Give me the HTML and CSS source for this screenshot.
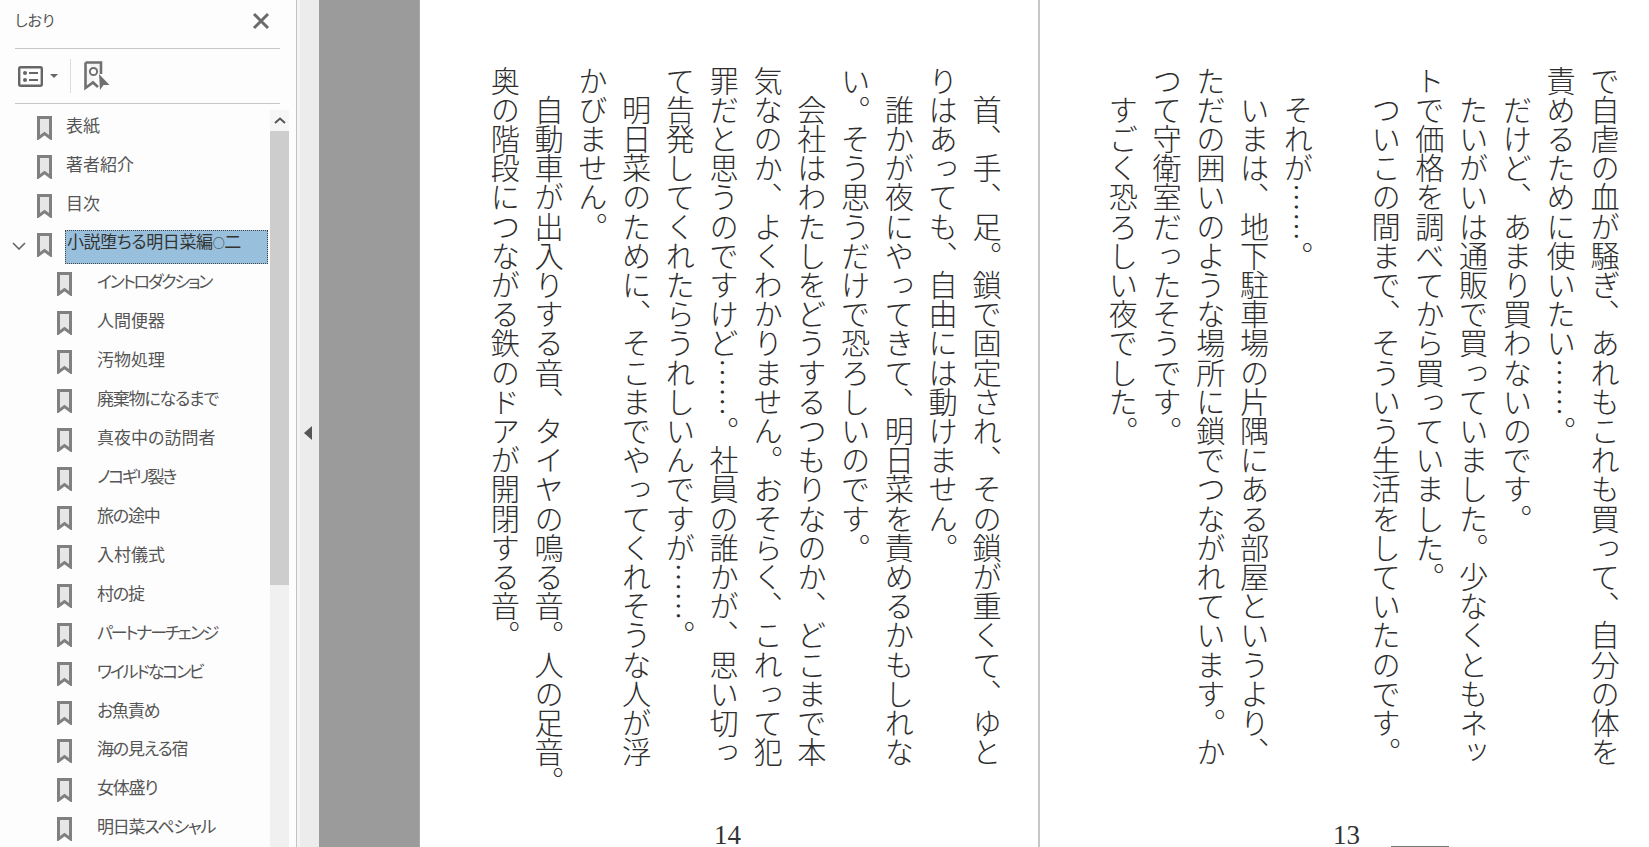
FILE: index.html
```html
<!DOCTYPE html>
<html lang="ja">
<head>
  <meta charset="UTF-8" />
  <title>しおり</title>
  <link rel="stylesheet" href="styles.css">
</head>
<body>

  <svg class="defs" width="0" height="0">
    <symbol id="mark" viewBox="0 0 15 24">
      <path d="M1.5 1.5H13.5V22L7.5 17.5L1.5 22Z" fill="#e6e6e6" stroke="#808080" stroke-width="3" />
    </symbol>
  </svg>

  <div class="sidebar">
    <div class="panel-head">
      <span class="panel-title">しおり</span>
      <svg class="close" width="18" height="18" viewBox="0 0 18 18">
        <path d="M2 2L16 16M16 2L2 16" stroke="#6a6a6a" stroke-width="3" fill="none" />
      </svg>
    </div>

    <div class="toolbar">
      <svg class="tool-list" width="25" height="21" viewBox="0 0 25 21">
        <rect x="1.2" y="1.2" width="22.6" height="18.6" rx="1.5" fill="none" stroke="#666" stroke-width="2.4" />
        <circle cx="7" cy="7" r="2" fill="#666" />
        <circle cx="7" cy="14" r="2" fill="#666" />
        <path d="M11 7H20M11 14H20" stroke="#666" stroke-width="2.2" />
      </svg>
      <span class="caret"></span>
      <span class="tool-sep"></span>
      <svg width="26" height="30" viewBox="0 0 26 30">
        <path d="M1.5 1.5H17V13M1.5 1.5V27L9 21.5L14 26" fill="#f4f4f4" stroke="#707070" stroke-width="2.6" />
        <circle cx="9.5" cy="10.5" r="3.6" fill="#fff" stroke="#707070" stroke-width="2" />
        <path d="M15 13L25.5 24H19.5L16 29Z" fill="#707070" />
      </svg>
    </div>

    <div class="tree-wrap">
      <div class="tree">
        <div class="row"><svg class="mark"><use href="#mark" /></svg><span class="label">表紙</span></div>
        <div class="row"><svg class="mark"><use href="#mark" /></svg><span class="label">著者紹介</span></div>
        <div class="row"><svg class="mark"><use href="#mark" /></svg><span class="label">目次</span></div>
        <div class="row open">
          <svg class="chevron" width="14" height="8" viewBox="0 0 14 8"><path d="M1 1L7 7L13 1" fill="none" stroke="#666" stroke-width="1.6" /></svg>
          <svg class="mark"><use href="#mark" /></svg>
          <span class="label selected">小説堕ちる明日菜編<span class="ring">○</span>二</span>
        </div>
        <div class="row sub"><svg class="mark"><use href="#mark" /></svg><span class="label tighter">イントロダクション</span></div>
        <div class="row sub"><svg class="mark"><use href="#mark" /></svg><span class="label">人間便器</span></div>
        <div class="row sub"><svg class="mark"><use href="#mark" /></svg><span class="label">汚物処理</span></div>
        <div class="row sub"><svg class="mark"><use href="#mark" /></svg><span class="label tight">廃棄物になるまで</span></div>
        <div class="row sub"><svg class="mark"><use href="#mark" /></svg><span class="label">真夜中の訪問者</span></div>
        <div class="row sub"><svg class="mark"><use href="#mark" /></svg><span class="label tighter">ノコギリ裂き</span></div>
        <div class="row sub"><svg class="mark"><use href="#mark" /></svg><span class="label tight">旅の途中</span></div>
        <div class="row sub"><svg class="mark"><use href="#mark" /></svg><span class="label">入村儀式</span></div>
        <div class="row sub"><svg class="mark"><use href="#mark" /></svg><span class="label tight">村の掟</span></div>
        <div class="row sub"><svg class="mark"><use href="#mark" /></svg><span class="label tighter">パートナーチェンジ</span></div>
        <div class="row sub"><svg class="mark"><use href="#mark" /></svg><span class="label tighter">ワイルドなコンビ</span></div>
        <div class="row sub"><svg class="mark"><use href="#mark" /></svg><span class="label tight">お魚責め</span></div>
        <div class="row sub"><svg class="mark"><use href="#mark" /></svg><span class="label tight">海の見える宿</span></div>
        <div class="row sub"><svg class="mark"><use href="#mark" /></svg><span class="label tight">女体盛り</span></div>
        <div class="row sub"><svg class="mark"><use href="#mark" /></svg><span class="label tight">明日菜スペシャル</span></div>
      </div>
      <div class="scrollbar">
        <div class="scroll-up">
          <svg width="12" height="7" viewBox="0 0 12 7"><path d="M1 6L6 1.5L11 6" fill="none" stroke="#555" stroke-width="2" /></svg>
        </div>
        <div class="scroll-thumb"></div>
      </div>
    </div>
  </div>

  <div class="splitter"><span class="collapse"></span></div>

  <div class="gutter"></div>

  <div class="page page-left">
    <div class="text">
      <div class="line">　首、手、足。鎖で固定され、その鎖が重くて、ゆと</div>
      <div class="line">りはあっても、自由には動けません。</div>
      <div class="line">　誰かが夜にやってきて、明日菜を責めるかもしれな</div>
      <div class="line">い。そう思うだけで恐ろしいのです。</div>
      <div class="line">　会社はわたしをどうするつもりなのか、どこまで本</div>
      <div class="line">気なのか、よくわかりません。おそらく、これって犯</div>
      <div class="line">罪だと思うのですけど……。社員の誰かが、思い切っ</div>
      <div class="line">て告発してくれたらうれしいんですが……。</div>
      <div class="line">　明日菜のために、そこまでやってくれそうな人が浮</div>
      <div class="line">かびません。</div>
      <div class="line">　自動車が出入りする音、タイヤの鳴る音。人の足音。</div>
      <div class="line">奥の階段につながる鉄のドアが開閉する音。</div>
    </div>
    <div class="folio">14</div>
  </div>

  <div class="page page-right">
    <div class="text">
      <div class="line">で自虐の血が騒ぎ、あれもこれも買って、自分の体を</div>
      <div class="line">責めるために使いたい……。</div>
      <div class="line">　だけど、あまり買わないのです。</div>
      <div class="line">　たいがいは通販で買っていました。少なくともネッ</div>
      <div class="line">トで価格を調べてから買っていました。</div>
      <div class="line">　ついこの間まで、そういう生活をしていたのです。</div>
      <div class="line">　</div>
      <div class="line">　それが……。</div>
      <div class="line">　いまは、地下駐車場の片隅にある部屋というより、</div>
      <div class="line">ただの囲いのような場所に鎖でつながれています。か</div>
      <div class="line">つて守衛室だったそうです。</div>
      <div class="line">　すごく恐ろしい夜でした。</div>
    </div>
    <div class="foot">
      <span class="folio">13</span>
      <span class="foot-rule"></span>
    </div>
  </div>

</body>
</html>
```

FILE: styles.css
```css
* {
  box-sizing: border-box;
  margin: 0;
  padding: 0;
}

body, html {
  height: 100%;
  overflow: hidden;
}

body {
  display: flex;
  height: 847px;
  background: #fff;
  font-family: 'Noto Sans CJK JP', sans-serif;
}

.defs {
  position: absolute;
}

/* Left panel */
.sidebar {
  width: 296px;
  flex: none;
  background: #fdfdfd;
  color: #555;
  display: flex;
  flex-direction: column;
}

.panel-head {
  height: 49px;
  margin: 0 16px 0 15px;
  padding: 0 10px 6px 0;
  border-bottom: 1px solid #c8c8c8;
  display: flex;
  align-items: center;
  justify-content: space-between;
}

.panel-title {
  font-size: 15px;
  line-height: 20px;
  padding-bottom: 2px;
  font-feature-settings: "palt";
}

.toolbar {
  height: 55px;
  margin: 0 16px 0 15px;
  padding-left: 3px;
  border-bottom: 1px solid #c8c8c8;
  display: flex;
  align-items: center;
}

.caret {
  margin-left: 7px;
  border-left: 4px solid transparent;
  border-right: 4px solid transparent;
  border-top: 4px solid #666;
}

.tool-sep {
  width: 1px;
  height: 34px;
  margin: 0 13px 0 12px;
  background: #dcdcdc;
}

.tree-wrap {
  flex: 1;
  min-height: 0;
  display: flex;
  padding-top: 5px;
}

.tree {
  width: 270px;
  flex: none;
}

.row {
  height: 38.95px;
  display: flex;
  align-items: center;
  padding-left: 37px;
  position: relative;
}

.row.sub {
  padding-left: 57px;
}

.mark {
  width: 15px;
  height: 24px;
  flex: none;
}

.label {
  margin-left: 14px;
  padding-bottom: 6px;
  font-size: 17px;
  line-height: 28px;
  white-space: nowrap;
  font-feature-settings: "palt";
}

.sub .label {
  margin-left: 25px;
}

.label.tight {
  letter-spacing: -1.2px;
}

.label.tighter {
  letter-spacing: -2.2px;
}

.chevron {
  position: absolute;
  left: 12px;
  top: 16px;
}

.label.selected {
  margin-left: 13px;
  margin-top: 4px;
  width: 203px;
  height: 34px;
  padding: 0 0 0 1px;
  background: #98bfdb;
  border: 1px dotted #444;
  color: #333;
  line-height: 20px;
  letter-spacing: -0.4px;
}

.ring {
  font-size: 12px;
}

.scrollbar {
  width: 19px;
  flex: none;
  margin-top: 1px;
  background: #f0f0f0;
  display: flex;
  flex-direction: column;
}

.scroll-up {
  height: 21px;
  background: #f6f6f6;
  display: flex;
  align-items: center;
  justify-content: center;
}

.scroll-thumb {
  height: 454px;
  background: #cdcdcd;
}

/* Collapse strip */
.splitter {
  width: 23px;
  flex: none;
  background: #ececec;
  border-left: 1px solid #c4c4c4;
  box-shadow: inset 3px 0 0 #f4f4f4;
  display: flex;
  align-items: center;
  justify-content: center;
}

.collapse {
  border-top: 7px solid transparent;
  border-bottom: 7px solid transparent;
  border-right: 8px solid #555;
  margin-top: 19px;
}

.gutter {
  width: 101px;
  flex: none;
  background: #9b9b9b;
  border-right: 1px solid #a9a9a9;
}

/* Book pages */
.page {
  flex: none;
  height: 847px;
  display: flex;
  flex-direction: column;
  color: #2e2e2e;
}

.page-left {
  width: 620px;
  border-right: 2px solid #c6c6c6;
}

.page-right {
  flex: 1;
}

.text {
  writing-mode: vertical-rl;
  height: 768px;
  padding-top: 66px;
  padding-right: 23px;
  font-size: 29.2px;
  line-height: 43.8px;
  font-weight: 300;
  align-self: flex-end;
}

.page-left .text {
  padding-right: 30px;
}

.line {
  white-space: nowrap;
}

.folio {
  font-family: 'Liberation Serif', serif;
  font-size: 27px;
  line-height: 23px;
  color: #333;
}

.page-left .folio {
  margin: 56px 0 0 294px;
}

.foot {
  margin: 56px 0 0 293px;
  display: flex;
  align-items: flex-start;
}

.foot-rule {
  width: 58px;
  height: 1px;
  margin: 22px 0 0 31px;
  background: #777;
}
```
